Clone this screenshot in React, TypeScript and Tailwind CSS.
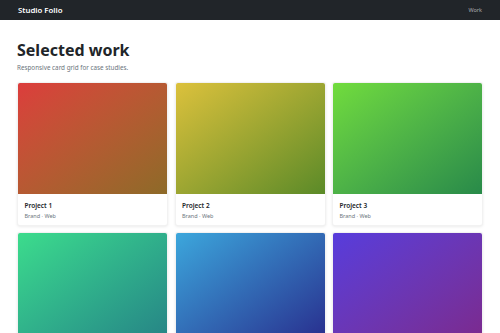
const projects = [
  { name: 'Project 1', tags: 'Brand · Web', bg: 'bg-linear-to-br from-[#dc3c3c] to-[#8d6a28]' },
  { name: 'Project 2', tags: 'Brand · Web', bg: 'bg-linear-to-br from-[#dcc13c] to-[#5a8a28]' },
  { name: 'Project 3', tags: 'Brand · Web', bg: 'bg-linear-to-br from-[#71dc3c] to-[#288a49]' },
  { name: 'Project 4', tags: 'Brand · Web', bg: 'bg-linear-to-br from-[#3cdc8c] to-[#268285]' },
  { name: 'Project 5', tags: 'Brand · Web', bg: 'bg-linear-to-br from-[#3ca7dc] to-[#282a8c]' },
  { name: 'Project 6', tags: 'Brand · Web', bg: 'bg-linear-to-br from-[#573cdc] to-[#7c288c]' },
]

export default function App() {
  return (
    <div className="min-h-screen bg-white font-['Noto_Sans','Open_Sans',sans-serif] text-[#212529]">
      <nav className="h-[20px] bg-[#212529] flex items-center justify-between px-[18px]">
        <span className="text-[7.8px] font-semibold text-white pt-[1px]">Studio Folio</span>
        <span className="text-[5.5px] text-white/60 pt-[1px]">Work</span>
      </nav>

      <main className="px-[17px] pt-[21px]">
        <h1 className="text-[16px] font-bold leading-[1.2]">Selected work</h1>
        <p className="text-[6.3px] leading-[9.5px] text-[#6c757d] mt-[3px]">Responsive card grid for case studies.</p>

        <div className="grid grid-cols-3 gap-x-[6.5px] gap-y-[6px] mt-[9px]">
          {projects.map(p => (
            <div
              key={p.name}
              className="rounded-[3px] border border-black/5 bg-white shadow-[0_1px_3px_rgba(0,0,0,0.08)] overflow-hidden"
            >
              <div className={`aspect-[4/3] ${p.bg}`} />
              <div className="px-[6.5px] pt-[8px] pb-[5.5px]">
                <div className="text-[6.5px] font-semibold leading-[8px]">{p.name}</div>
                <div className="text-[5.5px] text-[#6c757d] leading-[7px] mt-[2.5px]">{p.tags}</div>
              </div>
            </div>
          ))}
        </div>
      </main>
    </div>
  )
}
